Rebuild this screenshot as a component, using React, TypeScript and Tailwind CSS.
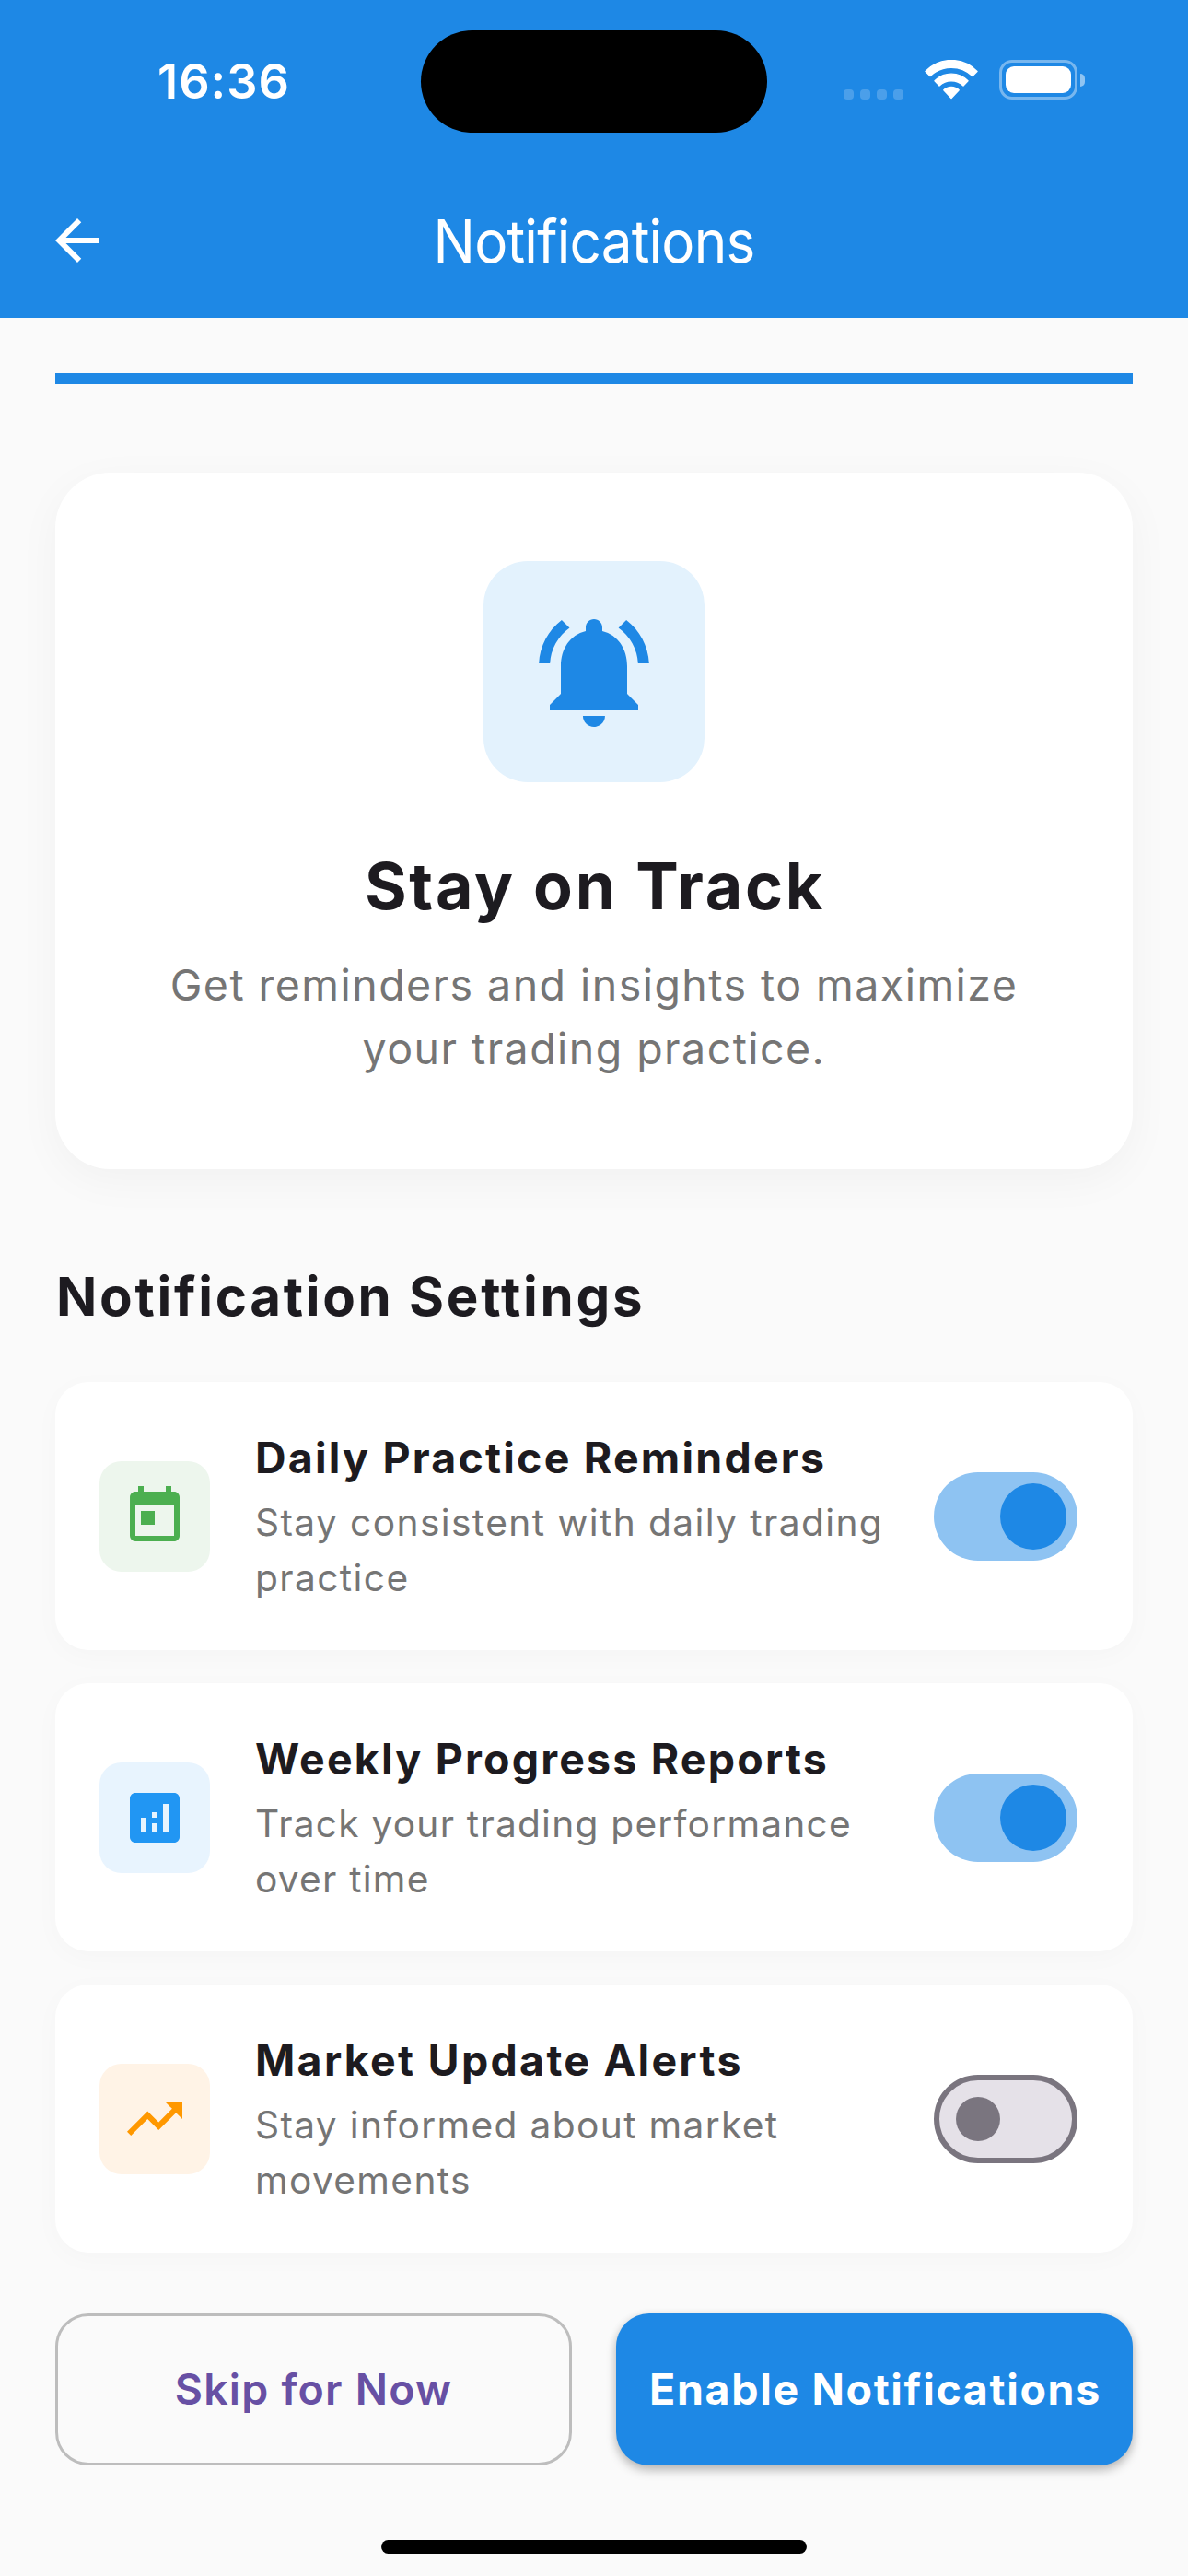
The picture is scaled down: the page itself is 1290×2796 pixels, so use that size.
import { useState } from "react";
import type { IconType } from "react-icons";
import {
  MdAnalytics,
  MdArrowBack,
  MdNotificationsActive,
  MdToday,
  MdTrendingUp,
} from "react-icons/md";

function WifiIcon() {
  return (
    <svg className="h-[43px] w-[58px]" viewBox="0 0 58 43" fill="#fff" stroke="#fff" strokeWidth="1.4" strokeLinejoin="round">
      <path d="M1 12.6 A38.5 38.5 0 0 1 57 12.6 L52 17.6 A33 33 0 0 0 6 17.6 Z" />
      <path d="M11 22.8 A25 25 0 0 1 47 22.8 L42 28 A18.8 18.8 0 0 0 16 28 Z" />
      <path d="M20.8 32.8 A11.8 11.8 0 0 1 37.2 32.8 L29 41.4 Z" />
    </svg>
  );
}

function Battery() {
  return (
    <div className="flex items-center gap-[3px]">
      <div className="h-[43px] w-[85px] rounded-[14px] border-[3px] border-white/40 p-[4px]">
        <div className="h-full w-full rounded-[9px] bg-white" />
      </div>
      <div className="h-[14px] w-[5px] rounded-r-full bg-white/50" />
    </div>
  );
}

function StatusBar() {
  return (
    <div className="flex h-[177px] items-center">
      <div className="w-[457px] pl-[171px] text-[52.3px] leading-none font-semibold tracking-[1.02px]">16:36</div>
      <div className="h-[111px] w-[376px] rounded-full bg-black" />
      <div className="flex items-center gap-[23px] pb-[4px] pl-[83px]">
        <div className="flex h-[42px] items-end gap-[7px]">
          <span className="h-[11px] w-[11px] rounded-[4px] bg-white/20" />
          <span className="h-[11px] w-[11px] rounded-[4px] bg-white/20" />
          <span className="h-[11px] w-[11px] rounded-[4px] bg-white/20" />
          <span className="h-[11px] w-[11px] rounded-[4px] bg-white/20" />
        </div>
        <WifiIcon />
        <Battery />
      </div>
    </div>
  );
}

function AppBar() {
  return (
    <div className="flex h-[168px] items-center px-12">
      <button type="button" aria-label="Back" className="h-[72px] w-[72px]">
        <MdArrowBack className="h-[72px] w-[72px]" />
      </button>
      <h1 className="flex-1 scale-x-[0.94] pt-px text-center text-[64px] leading-none font-normal tracking-[-0.82px]">
        Notifications
      </h1>
      <div className="w-[72px]" />
    </div>
  );
}

function Switch({ on, onToggle }: { on: boolean; onToggle: () => void }) {
  return (
    <button
      type="button"
      role="switch"
      aria-checked={on}
      onClick={onToggle}
      className={
        on
          ? "flex h-24 w-[156px] shrink-0 items-center justify-end rounded-full bg-[#8ec3f2] pr-3"
          : "flex h-24 w-[156px] shrink-0 items-center rounded-full border-[6px] border-[#7a757f] bg-[#e5e1e8] pl-[18px]"
      }
    >
      <span className={on ? "h-[72px] w-[72px] rounded-full bg-[#1e88e5]" : "h-12 w-12 rounded-full bg-[#7a757f]"} />
    </button>
  );
}

interface Setting {
  title: string;
  detail: string;
  Icon: IconType;
  tile: string;
  titleTracking: string;
  detailTracking: string;
  enabled: boolean;
}

const settings: Setting[] = [
  {
    title: "Daily Practice Reminders",
    detail: "Stay consistent with daily trading practice",
    Icon: MdToday,
    tile: "bg-[#edf6ed] text-[#4caf50]",
    titleTracking: "tracking-[2.2px]",
    detailTracking: "tracking-[1.38px]",
    enabled: true,
  },
  {
    title: "Weekly Progress Reports",
    detail: "Track your trading performance over time",
    Icon: MdAnalytics,
    tile: "bg-[#e8f4fe] text-[#2196f3]",
    titleTracking: "tracking-[2.18px]",
    detailTracking: "tracking-[1.22px]",
    enabled: true,
  },
  {
    title: "Market Update Alerts",
    detail: "Stay informed about market movements",
    Icon: MdTrendingUp,
    tile: "bg-[#fff3e6] text-[#ff9800]",
    titleTracking: "tracking-[2.28px]",
    detailTracking: "tracking-[1.33px]",
    enabled: false,
  },
];

function SettingCard({ title, detail, Icon, tile, titleTracking, detailTracking, enabled }: Setting) {
  const [on, setOn] = useState(enabled);
  return (
    <div className="flex items-center rounded-[36px] bg-white py-12 pr-[60px] pl-12 shadow-[0_6px_30px_rgba(0,0,0,0.022)]">
      <div className={`flex h-[120px] w-[120px] shrink-0 items-center justify-center rounded-3xl ${tile}`}>
        <Icon className="h-[72px] w-[72px]" />
      </div>
      <div className="ml-[49px] w-[715px]">
        <h3 className={`text-[46.5px] leading-[68px] font-bold text-[#1d1b20] ${titleTracking}`}>{title}</h3>
        <p className={`mt-[7px] text-[40.7px] leading-[60px] text-[#757575] ${detailTracking}`}>{detail}</p>
      </div>
      <div className="ml-auto flex">
        <Switch on={on} onToggle={() => setOn(!on)} />
      </div>
    </div>
  );
}

export default function App() {
  return (
    <div className="flex h-[2796px] w-[1290px] flex-col overflow-hidden bg-[#fafafa] font-['Inter',sans-serif] antialiased">
      <header className="h-[345px] bg-[#1e88e5] text-white">
        <StatusBar />
        <AppBar />
      </header>

      <main className="flex flex-col px-[60px] pt-[60px]">
        <div className="h-3 bg-[#1e88e5]" />

        <section className="mt-24 flex flex-col items-center rounded-[60px] bg-white px-24 pt-24 pb-[97px] text-center shadow-[0_12px_48px_rgba(0,0,0,0.04)]">
          <div className="flex h-60 w-60 items-center justify-center rounded-[48px] bg-[#e3f2fd] text-[#1e88e5]">
            <MdNotificationsActive className="h-36 w-36" />
          </div>
          <h2 className="mt-[65px] pl-[2px] text-[69.8px] leading-[96px] font-bold tracking-[2.75px] text-[#1d1b20]">
            Stay on Track
          </h2>
          <p className="mt-[25px] text-[46.5px] leading-[68.5px] tracking-[1.45px] text-[#757575]">
            Get reminders and insights to maximize your trading practice.
          </p>
        </section>

        <h2 className="mt-24 pl-px text-[58.2px] leading-[84px] font-bold tracking-[2.7px] text-[#1d1b20]">
          Notification Settings
        </h2>

        <div className="mt-[51px] flex flex-col gap-9">
          {settings.map((setting) => (
            <SettingCard key={setting.title} {...setting} />
          ))}
        </div>
      </main>

      <div className="mt-[66px] grid grid-cols-2 gap-12 px-[60px]">
        <button
          type="button"
          className="h-[165px] rounded-[36px] border-[3px] border-[#bdbdbd] text-[46.5px] font-semibold tracking-[1.22px] text-[#6750a4]"
        >
          Skip for Now
        </button>
        <button
          type="button"
          className="h-[165px] rounded-[36px] bg-[#1e88e5] pl-[2px] text-[46.5px] font-bold tracking-[1.65px] whitespace-nowrap text-white shadow-[0_6px_12px_rgba(0,0,0,0.2),0_2px_10px_rgba(0,0,0,0.12)]"
        >
          Enable Notifications
        </button>
      </div>

      <div className="mx-auto mt-[81px] h-[15px] w-[462px] rounded-full bg-black" />
    </div>
  );
}
